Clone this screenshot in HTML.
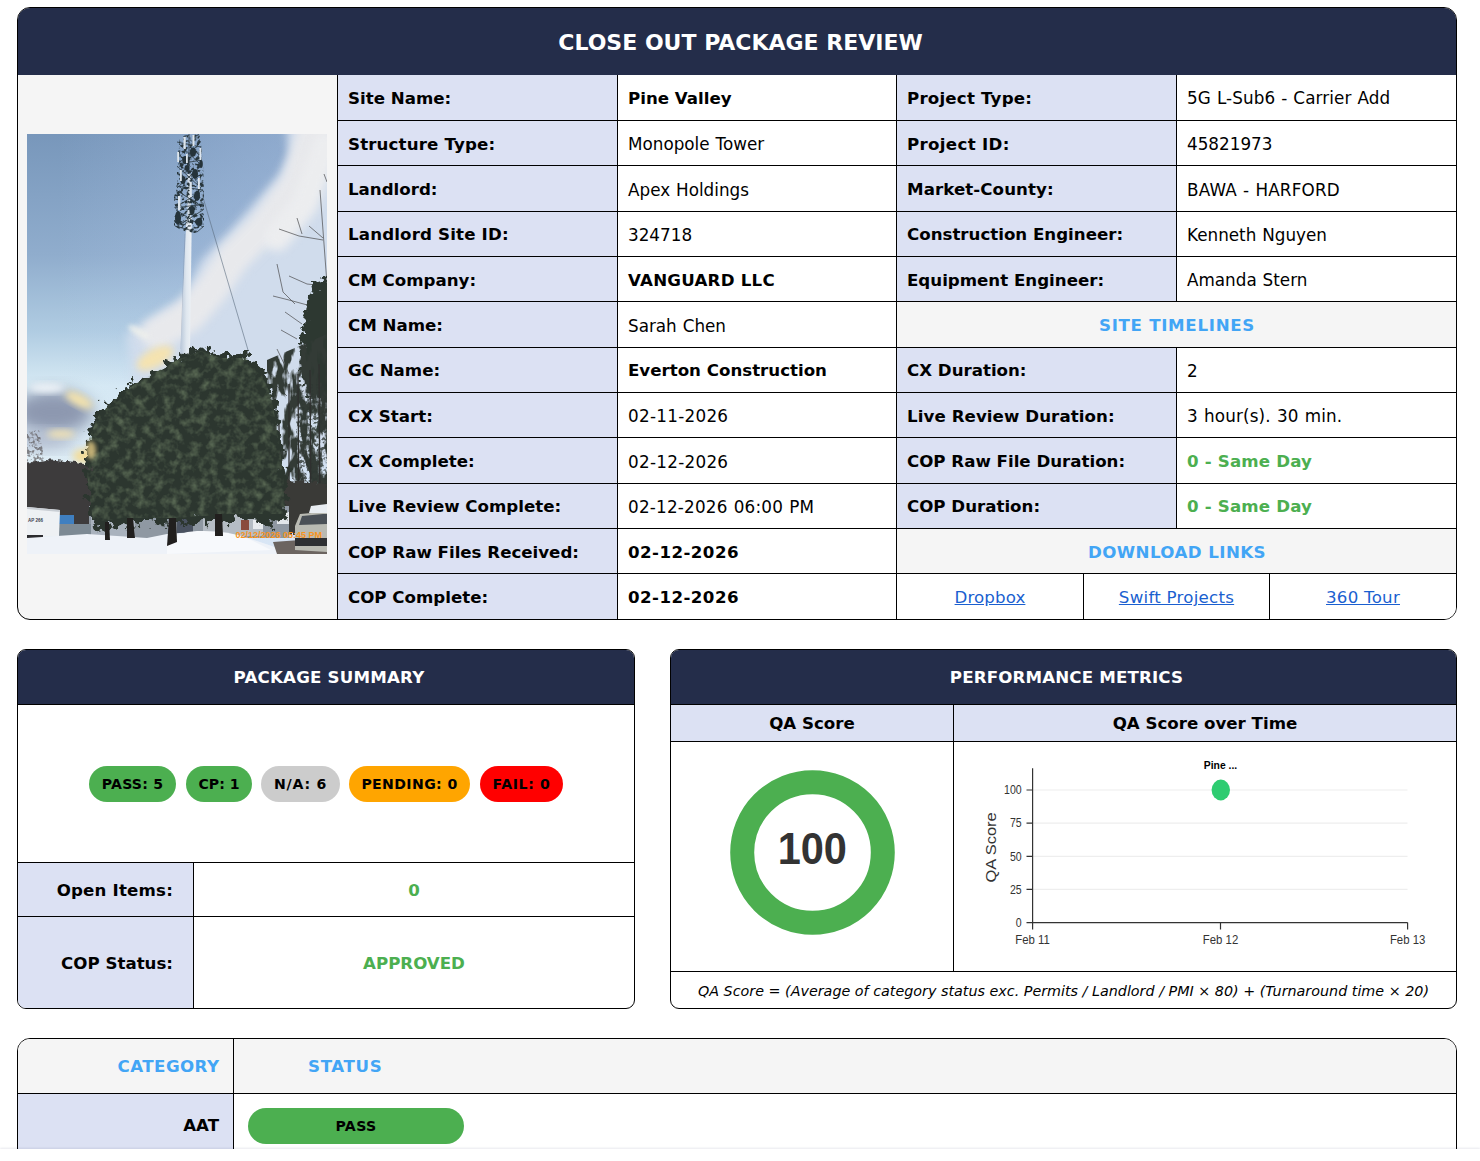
<!DOCTYPE html>
<html lang="en">
<head>
<meta charset="utf-8">
<title>Close Out Package Review</title>
<style>
*{box-sizing:border-box;margin:0;padding:0}
html,body{width:1480px;height:1161px;overflow:hidden;background:#fff}
body{position:relative;font-family:"DejaVu Sans","Liberation Sans",sans-serif;color:#000;font-size:16.65px}
.card{position:absolute;border:1px solid #000;border-radius:14px;overflow:hidden;background:#fff}
.hd{background:#242d4a;color:#fff;font-weight:bold;text-align:center}
/* top card */
#top{left:17px;top:7px;width:1440px;height:613px;background:#f5f5f5;border-radius:13px}
#top .hd{height:67px;line-height:70px;font-size:22px;padding-left:7px}
#photo{position:absolute;left:9px;top:126px;width:300px;height:420px;display:block}
#info{position:absolute;left:319px;top:66.8px;width:1120px;height:544px;display:grid;grid-template-columns:280px 279px 280px 281px;grid-template-rows:repeat(12,45.3333px)}
#info>div{border-left:1px solid #000;border-top:1px solid #000;padding:2px 0 0 10px;display:flex;align-items:center;background:#fff;white-space:nowrap}
#info>div.r1{border-top:none}
#info>div.l{background:#dce1f3;font-weight:bold}
#info>div.b{font-weight:bold}
#info>div.g{font-weight:bold;color:#4caf50}
#info>div.sec{grid-column:3 / span 2;background:#f5f5f5;color:#42a5f5;font-weight:bold;justify-content:center;padding:2px 0 0}
#info>div.links{grid-column:3 / span 2;padding:0;display:grid;grid-template-columns:187px 186px 187px;border-left:none}
#info>div.links>div{border-left:1px solid #000;display:flex;align-items:center;justify-content:center;height:100%;padding-top:2px}
a{color:#1a5fd0;text-decoration:underline}
.v{font-size:16.8px;word-spacing:.6px}

/* summary card */
#sum{left:17px;top:649px;width:618px;height:360px;border-radius:9px}
.hd2{height:55px;line-height:55px;font-size:16.65px;border-bottom:1px solid #000}
.pill{position:absolute;height:36px;line-height:36px;border-radius:18px;text-align:center;font-weight:bold;font-size:14.1px;white-space:nowrap}
.pg{background:#4caf50}.pn{background:#ccc}.po{background:#ffa500}.pr{background:#ff0000}
#sum .row{position:absolute;left:0;width:616px;border-top:1px solid #000;display:flex}
#sum .row .k{width:176px;background:#dce1f3;border-right:1px solid #000;font-weight:bold;display:flex;align-items:center;justify-content:flex-end;padding:2px 20px 0 0;font-size:16.65px}
#sum .row .val{flex:1;display:flex;align-items:center;justify-content:center;font-weight:bold;color:#4caf50;font-size:16.65px;padding-top:2px}
/* perf card */
#perf{left:670px;top:649px;width:787px;height:360px;border-radius:9px}
#perf .sub{position:absolute;top:55px;height:37px;background:#dce1f3;border-bottom:1px solid #000;font-weight:bold;font-size:16.65px;display:flex;align-items:center;justify-content:center}
#perf .vline{position:absolute;left:282px;top:55px;width:1px;height:267px;background:#000}
#perf .foot{position:absolute;left:0;top:321px;width:785px;height:37px;border-top:1px solid #000;font-style:italic;font-size:14.32px;padding-top:2px;display:flex;align-items:center;justify-content:center;white-space:nowrap}
#perf svg{position:absolute;left:0;top:0}
/* category card */
#cat{left:17px;top:1038px;width:1440px;height:140px;border-radius:13px;border-bottom-left-radius:0;border-bottom-right-radius:0}
#cat .h{position:absolute;left:0;top:0;width:1438px;height:55px;background:#f5f5f5;border-bottom:1px solid #000}
#cat .vl{position:absolute;left:215px;top:0;width:1px;height:140px;background:#000}
#cat .bl{color:#42a5f5;font-weight:bold;font-size:16.65px;position:absolute;white-space:nowrap}
#cat .lab{position:absolute;left:0;top:55px;width:215px;height:90px;background:#dce1f3}
#bottom{position:absolute;left:0;top:1149px;width:1480px;height:12px;background:#fff;box-shadow:0 -1px 2px rgba(30,40,90,.1)}
</style>
</head>
<body>
<div class="card" id="top">
  <div class="hd">CLOSE OUT PACKAGE REVIEW</div>
  <svg id="photo" viewBox="0 0 300 420" preserveAspectRatio="none" color-interpolation-filters="sRGB">
    <defs>
      <linearGradient id="sky" x1="0" y1="0" x2="0" y2="1">
        <stop offset="0" stop-color="#7897bb"/><stop offset=".29" stop-color="#90adcd"/><stop offset=".47" stop-color="#b0cce2"/><stop offset=".6" stop-color="#d7eaf4"/><stop offset="1" stop-color="#e4eef5"/>
      </linearGradient>
      <linearGradient id="skyx" x1="0" y1="0" x2="1" y2="0"><stop offset=".1" stop-color="#bed2f5" stop-opacity="0"/><stop offset=".7" stop-color="#bed2f5" stop-opacity=".26"/><stop offset="1" stop-color="#bed2f5" stop-opacity=".36"/></linearGradient>
      <linearGradient id="pole" x1="0" y1="0" x2="1" y2="0"><stop offset="0" stop-color="#b4c3d6"/><stop offset=".55" stop-color="#dfe7ef"/><stop offset="1" stop-color="#eef2f6"/></linearGradient>
      <filter id="b2" x="-30%" y="-30%" width="160%" height="160%"><feGaussianBlur stdDeviation="2"/></filter>
      <filter id="b5" x="-30%" y="-30%" width="160%" height="160%"><feGaussianBlur stdDeviation="5"/></filter>
      <filter id="b3" x="-30%" y="-30%" width="160%" height="160%"><feGaussianBlur stdDeviation="3.5"/></filter>
      <filter id="b7" x="-30%" y="-30%" width="160%" height="160%"><feGaussianBlur stdDeviation="8"/></filter>
      <filter id="b12" x="-30%" y="-30%" width="160%" height="160%"><feGaussianBlur stdDeviation="13"/></filter>
      <filter id="rg" x="-10%" y="-10%" width="120%" height="120%"><feTurbulence type="fractalNoise" baseFrequency=".13" numOctaves="3" seed="7" result="n"/><feDisplacementMap in="SourceGraphic" in2="n" scale="22" xChannelSelector="R" yChannelSelector="G"/></filter>
      <filter id="rg2" x="-10%" y="-10%" width="120%" height="120%"><feTurbulence type="fractalNoise" baseFrequency=".2" numOctaves="2" seed="3" result="n"/><feDisplacementMap in="SourceGraphic" in2="n" scale="8" xChannelSelector="R" yChannelSelector="G"/></filter>
      <filter id="tex" x="0" y="0" width="100%" height="100%"><feTurbulence type="fractalNoise" baseFrequency=".11" numOctaves="3" seed="11" result="n"/><feColorMatrix in="n" type="matrix" values="0 0 0 0 .34  0 0 0 0 .4  0 0 0 0 .32  0 0 2.4 0 -1.0" result="c"/><feComposite in="c" in2="SourceGraphic" operator="in"/></filter>
      <filter id="lace" x="-10%" y="-10%" width="120%" height="120%"><feTurbulence type="fractalNoise" baseFrequency=".3" numOctaves="2" seed="5" result="n"/><feColorMatrix in="n" type="matrix" values="0 0 0 0 0  0 0 0 0 0  0 0 0 0 0  5 0 0 0 -2.3" result="m"/><feComposite in="SourceGraphic" in2="m" operator="in"/></filter>
      <filter id="lace2" x="-10%" y="-10%" width="120%" height="120%"><feTurbulence type="fractalNoise" baseFrequency=".12 .05" numOctaves="3" seed="9" result="n"/><feColorMatrix in="n" type="matrix" values="0 0 0 0 0  0 0 0 0 0  0 0 0 0 0  6 0 0 0 -2.3" result="m"/><feComposite in="SourceGraphic" in2="m" operator="in"/></filter>
      <clipPath id="pc"><rect width="300" height="420"/></clipPath>
    </defs>
    <g clip-path="url(#pc)">
    <rect width="300" height="420" fill="url(#sky)"/>
    <!-- pale sky right of cloud band -->
    <rect width="300" height="420" fill="url(#skyx)"/>
    <path d="M257 -30 L262 20 Q255 40 243 51 L203 97 L174 126 L158 162 L113 192 L99 200 L120 330 L400 330 L400 -30 Z" fill="#d0dcec" filter="url(#b5)"/>
    <!-- main cloud band -->
    <path d="M292 -20 L270 50 L238 92 L206 124 L186 154 L162 182 L130 200" fill="none" stroke="#e8e9ec" stroke-width="32" stroke-linecap="round" stroke-linejoin="round" filter="url(#b5)"/>
    <path d="M300 10 L278 70 L250 104" fill="none" stroke="#ecedef" stroke-width="26" stroke-linecap="round" filter="url(#b5)"/>
    <!-- warm highlights -->
    <ellipse cx="128" cy="224" rx="20" ry="9" fill="#f5e3b0" filter="url(#b3)" transform="rotate(-28 128 224)"/>
    <ellipse cx="112" cy="198" rx="12" ry="4" fill="#f0f1ec" opacity=".8" filter="url(#b2)" transform="rotate(30 112 198)"/>
    <!-- left low clouds -->
    <ellipse cx="26" cy="278" rx="40" ry="22" fill="#8d98b0" filter="url(#b7)"/>
    <ellipse cx="14" cy="306" rx="34" ry="10" fill="#b3bdd0" filter="url(#b7)"/>
    <ellipse cx="52" cy="266" rx="15" ry="6" fill="#f4e3ad" filter="url(#b3)" transform="rotate(28 52 266)"/>
    <ellipse cx="20" cy="254" rx="18" ry="5" fill="#eef3f8" filter="url(#b3)"/>
    <ellipse cx="34" cy="300" rx="14" ry="4" fill="#f2e2b2" filter="url(#b3)"/>
    <ellipse cx="56" cy="322" rx="10" ry="7" fill="#f3dc98" filter="url(#b3)"/>
    <!-- guy wire -->
    <path d="M175 60 L221 216" stroke="#5b6b7d" stroke-width=".6" fill="none"/>
    <path d="M158 100 L154 215" stroke="#7d8c9e" stroke-width=".4" fill="none"/>
    <!-- pole -->
    <path d="M159.4 84 L164.8 84 L162.8 232 L152.8 232 Z" fill="url(#pole)"/>
    <!-- antenna cluster -->
    <rect x="160.4" y="40" width="3.4" height="48" fill="#cfd9e3"/>
    <g filter="url(#lace)" fill="#28363c">
      <path d="M153 2 L173 0 L176 30 L177 60 L177 92 L168 99 L156 97 L147 92 L147 62 L150 56 L150 30Z"/>
    </g>
    <g stroke="#28363c" stroke-width=".8" fill="none">
      <path d="M150 8 L174 13 M151 30 L175 26 M149 52 L176 56 M148 74 L177 70 M148 92 L170 98 L177 92"/>
      <path d="M152 10 L172 29 M172 10 L152 29 M150 32 L174 54 M174 32 L150 54 M149 56 L176 73 M176 56 L149 73 M149 76 L176 93 M176 76 L149 93"/>
      <path d="M162 0 L162 40"/>
    </g>
    <g fill="#25333a"><ellipse cx="166" cy="18" rx="3" ry="4.5"/><ellipse cx="158" cy="26" rx="2.6" ry="4"/><ellipse cx="168" cy="40" rx="3" ry="5"/><ellipse cx="156" cy="46" rx="2.6" ry="4"/><ellipse cx="170" cy="62" rx="3" ry="5"/><ellipse cx="165" cy="76" rx="2.6" ry="4.5"/><ellipse cx="151" cy="84" rx="3" ry="7"/><ellipse cx="172" cy="88" rx="3.4" ry="4"/><ellipse cx="160" cy="34" rx="2.4" ry="3"/><ellipse cx="174" cy="30" rx="1.8" ry="4"/></g>
    <g fill="#dde5ec"><rect x="156.5" y="3" width="2.2" height="12"/><rect x="165.5" y="1" width="2" height="11"/><rect x="151" y="62" width="2.4" height="14"/><rect x="162.6" y="48" width="2.2" height="15"/><rect x="172.5" y="14" width="1.8" height="12"/><rect x="150.2" y="18" width="1.8" height="10"/><rect x="153" y="36" width="1.8" height="11"/><rect x="171" y="44" width="1.8" height="11"/><rect x="159" y="20" width="1.8" height="9"/></g>
    <!-- bare tree right -->
    <g stroke="#4b4a4c" fill="none" stroke-width=".7">
      <path d="M297 40 L300 48 M293 56 L297 110 L300 150 M282 92 L296 104 M252 95 L272 102 L296 106 M270 84 L275 100 M262 142 L280 150 L299 152 M250 130 L256 158 L268 170 M246 162 L262 166 L284 172 M258 178 L275 190 M254 196 L270 205 M250 215 L262 240 M248 250 L260 262"/>
    </g>
    <!-- right evergreens -->
    <g filter="url(#rg)"><path d="M278 178 Q280 154 292 148 L320 140 L320 268 L284 262 Q270 240 274 214 Z" fill="#2d3831"/></g>
    <g filter="url(#lace2)"><path d="M240 226 L300 200 L300 396 L240 396 Z" fill="#333b36"/></g>
    <g filter="url(#lace)" opacity=".8"><path d="M270 250 L300 250 L300 360 L268 360 Z" fill="#2f3833"/></g>
    <g stroke="#2f302f" stroke-width="1.3" fill="none"><path d="M262 250 L262 392 M271 240 L272 392 M283 236 L284 392 M292 230 L293 392 M252 290 L253 392"/></g>
    <g filter="url(#rg2)"><path d="M240 352 L262 346 L300 350 L310 400 L240 400 Z" fill="#3a3a37"/></g>
    <!-- left far treeline -->
    <g filter="url(#rg2)"><path d="M-10 330 L20 325 L48 328 L80 332 L80 392 L-10 392 Z" fill="#3d3b3c"/></g>
    <g filter="url(#lace)" opacity=".7"><path d="M-10 300 L12 296 L18 328 L-10 330 Z" fill="#5e5a5c"/></g>
    <!-- building / fence -->
    <rect x="62" y="372" width="200" height="32" fill="#8f98a2"/>
    <rect x="64" y="374" width="44" height="30" fill="#a9b2bd"/>
    <rect x="150" y="384" width="16" height="18" fill="#4a5260"/>
    <rect x="176" y="380" width="60" height="22" fill="#b5bcc4"/>
    <rect x="214" y="386" width="8" height="10" fill="#8a4a3c"/>
    <rect x="226" y="386" width="10" height="9" fill="#e8ebee"/>
    <rect x="32" y="381" width="15" height="9" fill="#3f7fc0"/>
    <rect x="32" y="390" width="32" height="12" fill="#7d8a94"/>
    <!-- trailer -->
    <path d="M0 373 L33 376 L32 402 L0 403 Z" fill="#eef1f4"/>
    <path d="M0 373 L33 376 L33 378 L0 375Z" fill="#c9ced4"/>
    <text x="1" y="388" font-family="Liberation Sans, sans-serif" font-size="4.5" font-weight="bold" fill="#3a4250">AP 266</text>
    <rect x="0" y="401" width="16" height="4" fill="#2b2b2e"/>
    <!-- snow -->
    <path d="M0 404 L60 400 L120 404 L140 400 Q170 396 215 402 L245 412 L262 420 L0 420Z" fill="#eef2f8"/>
    <path d="M140 408 Q150 398 170 397 Q200 396 220 404 L244 416 L140 420Z" fill="#f7f9fc"/>
    <path d="M246 408 L300 404 L300 420 L250 420Z" fill="#6b6460"/>
    <!-- truck -->
    <path d="M268 392 L273 380 L296 378 L300 378 L300 418 L268 416Z" fill="#b9bab2"/>
    <path d="M275 382 L296 380 L300 380 L300 390 L272 391Z" fill="#4a5056"/>
    <path d="M284 372 L300 370 L300 379 L282 379Z" fill="#e9edf1"/>
    <rect x="268" y="404" width="32" height="8" fill="#2e3033"/>
    <rect x="250" y="378" width="12" height="12" fill="#e2e6ea"/>
    <!-- main tree -->
    <g filter="url(#rg)"><path d="M66 396 L58 340 L60 304 L70 278 L90 260 L106 248 L127 236 L148 224 L168 215 L178 213 L196 222 L220 220 L236 234 L247 260 L252 294 L258 338 L260 384 L246 392 L210 384 L196 390 L176 386 L150 392 L120 388 L96 392 Z" fill="#2c362f"/></g>
    <g filter="url(#tex)"><path d="M66 388 L60 340 L62 304 L72 280 L92 262 L108 250 L129 238 L150 226 L174 217 L194 224 L220 224 L234 238 L244 262 L250 294 L256 338 L258 380 L200 380 L150 384 L96 384 Z" fill="#fff"/></g>
    <g fill="#211f1e"><path d="M142 384 L149 384 L150 408 L140 412Z"/><path d="M188 380 L195 380 L196 402 L188 402Z"/><path d="M100 384 L106 384 L108 404 L100 404Z"/><path d="M78 388 L82 388 L83 406 L78 406Z"/></g>
    <!-- sunset glow through tree -->
    <ellipse cx="64" cy="316" rx="5" ry="9" fill="#f1d48a" opacity=".75" filter="url(#b2)"/>
    <!-- timestamp -->
    <text x="208.5" y="404" font-family="Liberation Sans, sans-serif" font-weight="bold" font-size="9" fill="#f7941d" textLength="86.5" lengthAdjust="spacingAndGlyphs">02/12/2026 05:45 PM</text>
    </g>
  </svg>
  <div id="info">
    <div class="l r1">Site Name:</div><div class="b r1">Pine Valley</div><div class="l r1" style="letter-spacing:0.2px">Project Type:</div><div class="v r1" style="letter-spacing:0.09px">5G L-Sub6 - Carrier Add</div>
    <div class="l" style="letter-spacing:0.15px">Structure Type:</div><div class="v">Monopole Tower</div><div class="l" style="letter-spacing:0.33px">Project ID:</div><div class="v">45821973</div>
    <div class="l">Landlord:</div><div class="v">Apex Holdings</div><div class="l" style="letter-spacing:0.08px">Market-County:</div><div class="v" style="letter-spacing:0.18px">BAWA - HARFORD</div>
    <div class="l" style="letter-spacing:0.16px">Landlord Site ID:</div><div class="v">324718</div><div class="l">Construction Engineer:</div><div class="v">Kenneth Nguyen</div>
    <div class="l">CM Company:</div><div class="b" style="letter-spacing:0.25px">VANGUARD LLC</div><div class="l">Equipment Engineer:</div><div class="v">Amanda Stern</div>
    <div class="l">CM Name:</div><div class="v">Sarah Chen</div><div class="sec" style="letter-spacing:.7px">SITE TIMELINES</div>
    <div class="l">GC Name:</div><div class="b">Everton Construction</div><div class="l">CX Duration:</div><div class="v">2</div>
    <div class="l">CX Start:</div><div class="v" style="letter-spacing:0.28px">02-11-2026</div><div class="l" style="letter-spacing:0.08px">Live Review Duration:</div><div class="v" style="letter-spacing:0.16px">3 hour(s). 30 min.</div>
    <div class="l">CX Complete:</div><div class="v" style="letter-spacing:0.28px">02-12-2026</div><div class="l">COP Raw File Duration:</div><div class="g" style="letter-spacing:.17px">0 - Same Day</div>
    <div class="l">Live Review Complete:</div><div class="v" style="letter-spacing:0.2px">02-12-2026 06:00 PM</div><div class="l">COP Duration:</div><div class="g" style="letter-spacing:.17px">0 - Same Day</div>
    <div class="l">COP Raw Files Received:</div><div class="b" style="letter-spacing:.45px">02-12-2026</div><div class="sec" style="letter-spacing:.43px">DOWNLOAD LINKS</div>
    <div class="l">COP Complete:</div><div class="b" style="letter-spacing:.45px">02-12-2026</div><div class="links"><div><a style="letter-spacing:.1px">Dropbox</a></div><div><a style="letter-spacing:.25px">Swift Projects</a></div><div><a style="letter-spacing:.25px">360 Tour</a></div></div>
  </div>
</div>

<div class="card" id="sum">
  <div class="hd hd2" style="letter-spacing:.2px;padding-left:6px">PACKAGE SUMMARY</div>
  <div class="pill pg" style="left:71px;top:116px;width:87px;letter-spacing:.2px">PASS: 5</div>
  <div class="pill pg" style="left:168px;top:116px;width:66px">CP: 1</div>
  <div class="pill pn" style="left:243px;top:116px;width:79px;letter-spacing:.75px">N/A: 6</div>
  <div class="pill po" style="left:331px;top:116px;width:121px;letter-spacing:.38px">PENDING: 0</div>
  <div class="pill pr" style="left:462px;top:116px;width:83px;letter-spacing:.62px">FAIL: 0</div>
  <div class="row" style="top:212px;height:54px"><div class="k" style="letter-spacing:.18px">Open Items:</div><div class="val">0</div></div>
  <div class="row" style="top:266px;height:92px"><div class="k">COP Status:</div><div class="val">APPROVED</div></div>
</div>
<div class="card" id="perf">
  <div class="hd hd2" style="letter-spacing:.16px;padding-left:6px">PERFORMANCE METRICS</div>
  <div class="sub" style="left:0;width:282px">QA Score</div>
  <div class="sub" style="left:283px;width:502px">QA Score over Time</div>
  <div class="vline"></div>
  <svg width="785" height="358" viewBox="0 0 785 358" font-family="Liberation Sans, sans-serif">
    <circle cx="141.5" cy="202.5" r="70.3" fill="none" stroke="#4caf50" stroke-width="24"/>
    <text transform="translate(141.3 213.8) scale(.955 1)" text-anchor="middle" font-size="43.5" font-weight="bold" fill="#333">100</text>
    <g stroke="#eee" stroke-width="1.2">
      <line x1="362" x2="736.5" y1="140" y2="140"/><line x1="362" x2="736.5" y1="173.1" y2="173.1"/><line x1="362" x2="736.5" y1="206.3" y2="206.3"/><line x1="362" x2="736.5" y1="239.4" y2="239.4"/>
    </g>
    <g stroke="#333" stroke-width="1.2" fill="none">
      <path d="M361.6 118.3V272.6H736.6"/>
      <path d="M355.5 140h6M355.5 173.1h6M355.5 206.3h6M355.5 239.4h6M355.5 272.6h6"/>
      <path d="M361.6 272.6v7M549.5 272.6v7M736.6 272.6v7"/>
    </g>
    <ellipse cx="549.8" cy="140" rx="9.2" ry="10.4" fill="#2ecc71"/>
    <g font-size="12" fill="#333">
      <text transform="translate(350.7 144.3) scale(.88 1)" text-anchor="end">100</text>
      <text transform="translate(350.7 177.4) scale(.88 1)" text-anchor="end">75</text>
      <text transform="translate(350.7 210.6) scale(.88 1)" text-anchor="end">50</text>
      <text transform="translate(350.7 243.7) scale(.88 1)" text-anchor="end">25</text>
      <text transform="translate(350.7 276.9) scale(.88 1)" text-anchor="end">0</text>
      <text transform="translate(361.6 293.5) scale(.95 1)" text-anchor="middle">Feb 11</text>
      <text transform="translate(549.5 293.5) scale(.95 1)" text-anchor="middle">Feb 12</text>
      <text transform="translate(736.6 293.5) scale(.95 1)" text-anchor="middle">Feb 13</text>
    </g>
    <text transform="translate(549.5 118.6) scale(.9 1)" text-anchor="middle" font-size="11.5" font-weight="bold" fill="#000">Pine ...</text>
    <text transform="translate(325.4 197.5) rotate(-90) scale(1 .9)" text-anchor="middle" font-size="16.4" fill="#333">QA Score</text>
  </svg>
  <div class="foot">QA Score = (Average of category status exc. Permits / Landlord / PMI × 80) + (Turnaround time × 20)</div>
</div>
<div class="card" id="cat">
  <div class="h"></div>
  <div class="lab"></div>
  <div class="vl"></div>
  <div class="bl" style="right:1237px;top:18px;letter-spacing:.46px;margin-right:-.5px">CATEGORY</div>
  <div class="bl" style="left:290px;top:18px;letter-spacing:.66px">STATUS</div>
  <div style="position:absolute;right:1237px;top:77px;font-weight:bold;font-size:16.65px">AAT</div>
  <div class="pill pg" style="left:230px;top:69px;width:216px;font-size:14.1px;letter-spacing:.35px">PASS</div>
</div>
<div id="bottom"></div>
</body>
</html>
